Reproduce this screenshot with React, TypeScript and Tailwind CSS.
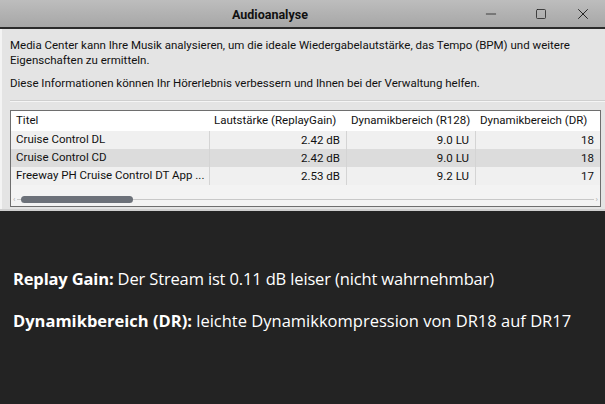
import { Minus, Square, X } from "lucide-react";

const rows = [
  { title: "Cruise Control DL", gain: "2.42 dB", r128: "9.0 LU", dr: "18" },
  { title: "Cruise Control CD", gain: "2.42 dB", r128: "9.0 LU", dr: "18" },
  { title: "Freeway PH Cruise Control DT App ...", gain: "2.53 dB", r128: "9.2 LU", dr: "17" },
];

export default function App() {
  return (
    <div className="w-[605px] h-[404px] bg-[#232323] flex flex-col overflow-hidden">
      {/* Window */}
      <div className="bg-[#e4e4e4] border-b-2 border-[#cfcfcf] font-['Roboto',sans-serif] text-[11.5px] text-[#111]">
        <div className="h-[29px] bg-gradient-to-b from-[#bdbdbd] to-[#a7a7a7] border-b-2 border-[#2b2b2b] flex items-center relative">
          <div className="flex-1 relative h-full">
            <span className="absolute left-[232px] top-[6px] font-bold text-[12.5px] text-[#111]">Audioanalyse</span>
          </div>
          <div className="flex items-center text-[#222]">
            <div className="w-[60px] flex justify-center">
              <Minus className="w-[16px] h-[16px]" strokeWidth={1.2} />
            </div>
            <div className="w-[40px] flex justify-center">
              <Square className="w-[12px] h-[12px]" strokeWidth={1.6} />
            </div>
            <div className="w-[44px] flex justify-center">
              <X className="w-[18px] h-[18px]" strokeWidth={1.3} />
            </div>
          </div>
        </div>
        <div className="pl-[8px] pr-[10px] pt-[9px] pb-[2px] border-l-2 border-[#f4f4f4]">
          <p className="leading-[15px]">
            Media Center kann Ihre Musik analysieren, um die ideale Wiedergabelautstärke, das Tempo (BPM) und weitere
            Eigenschaften zu ermitteln.
          </p>
          <p className="leading-[15px] mt-[8px]">
            Diese Informationen können Ihr Hörerlebnis verbessern und Ihnen bei der Verwaltung helfen.
          </p>
          <div className="h-[2px] bg-[#f5f5f5] border-t border-[#cfcfcf] mt-[9px] -mr-[10px]" />
          <div className="mt-[8px] bg-white border border-[#6e6e6e] flex flex-col mr-[-6px]">
            <div className="flex h-[20px] items-center">
              <div className="w-[198px] pl-[5px]">Titel</div>
              <div className="w-[137px] pl-[5px]">Lautstärke (ReplayGain)</div>
              <div className="w-[129px] pl-[5px]">Dynamikbereich (R128)</div>
              <div className="flex-1 pl-[5px]">Dynamikbereich (DR)</div>
            </div>
            {rows.map((r, i) => (
              <div
                key={i}
                className={`flex h-[18px] items-center ${i === 1 ? "bg-[#dcdcdc]" : "bg-[#f0f0f0]"}`}
              >
                <div className="w-[198px] pl-[5px] truncate">{r.title}</div>
                <div className="w-[137px] pr-[6px] text-right border-l border-[#d4d4d4] h-full leading-[18px]">{r.gain}</div>
                <div className="w-[129px] pr-[6px] text-right border-l border-[#d4d4d4] h-full leading-[18px]">{r.r128}</div>
                <div className="flex-1 pr-[6px] text-right border-l border-[#d4d4d4] h-full leading-[18px]">{r.dr}</div>
              </div>
            ))}
            <div className="h-[10px] bg-[#f3f3f3]" />
            <div className="h-[9px] flex items-center px-[2px] bg-[#f3f3f3] relative">
              <span className="text-[8px] text-[#aaa] leading-none">‹</span>
              <div className="flex-1 h-[1px] bg-[#c8c8c8] relative mx-[2px]">
                <div className="absolute left-[4px] top-[-3px] w-[112px] h-[7px] rounded-full bg-[#6c7179]" />
              </div>
              <span className="text-[8px] text-[#aaa] leading-none">›</span>
            </div>
            <div className="h-[2px] bg-[#f3f3f3]" />
          </div>
        </div>
      </div>

      {/* Caption */}
      <div className="flex-1 px-[13px] pt-[57px] font-['Open_Sans',sans-serif] text-[16.5px] text-white">
        <p className="leading-[22px] tracking-[-0.15px]">
          <span className="font-bold">Replay Gain:</span> Der Stream ist 0.11 dB leiser (nicht wahrnehmbar)
        </p>
        <p className="leading-[22px] mt-[20px]">
          <span className="font-bold">Dynamikbereich (DR):</span> leichte Dynamikkompression von DR18 auf DR17
        </p>
      </div>
    </div>
  );
}
